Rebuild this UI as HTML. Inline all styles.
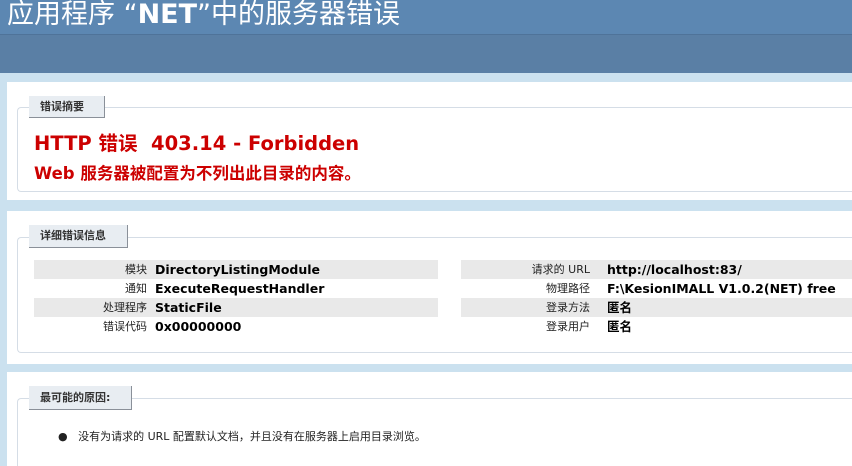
<!DOCTYPE html>
<html><head><meta charset="utf-8"><style>
*{margin:0;padding:0;box-sizing:border-box}
html,body{width:852px;height:466px;overflow:hidden}
body{background:#cbe1ef;font-family:"DejaVu Sans","Noto Sans CJK SC",sans-serif;position:relative}
#h1{position:absolute;left:0;top:0;width:852px;height:35px;background:#5c87b2;color:#fff;font-size:27px;line-height:30px;padding-left:7px;white-space:nowrap;border-bottom:1px solid #4f7399}
#band{position:absolute;left:0;top:35px;width:852px;height:38px;background:#5a7fa5}
.panel{position:absolute;left:7px;width:845px;background:#fff}
.fs{position:absolute;left:10px;right:0;border:1px solid #d5dde6;border-right:none;border-radius:4px 0 0 4px}
.lg{position:absolute;left:22px;background:#e8edf2;border-right:1px solid #8a9099;border-bottom:1px solid #8a9099;font-size:11px;font-weight:bold;color:#333;padding-left:11px;line-height:21px}
.red1{position:absolute;left:27px;top:45px;color:#cc0000;font-size:19.5px;font-weight:bold;white-space:nowrap}
.red2{position:absolute;left:27px;top:78px;color:#cc0000;font-size:16.5px;font-weight:bold;white-space:nowrap}
.row{position:absolute;height:19px;font-size:12.5px;line-height:19px;white-space:nowrap}
.g{background:#e9e9e9}
.lab{position:absolute;text-align:right;font-size:11px;color:#222}
.val{position:absolute;font-weight:bold;color:#000}
</style></head><body>
<div id="h1">应用程序 “<b>NET</b>”中的服务器错误</div>
<div id="band"></div>
<div class="panel" style="top:82px;height:118px">
 <div class="fs" style="top:25px;height:85px"></div>
 <div class="lg" style="top:14px;width:76px;height:22px">错误摘要</div>
 <div class="red1">HTTP 错误&nbsp; 403.14 - Forbidden</div>
 <div class="red2">Web 服务器被配置为不列出此目录的内容。</div>
</div>
<div class="panel" style="top:211px;height:153px">
 <div class="fs" style="top:26px;height:116px"></div>
 <div class="lg" style="top:14px;width:99px;height:23px">详细错误信息</div>
 <div class="row g" style="left:27px;top:49px;width:404px"></div>
 <div class="row g" style="left:27px;top:87px;width:404px"></div>
 <div class="row g" style="left:454px;top:49px;width:391px"></div>
 <div class="row g" style="left:454px;top:87px;width:391px"></div>
 <div class="row" style="left:0;top:49px;width:845px"><span class="lab" style="right:705px">模块</span><span class="val" style="left:148px">DirectoryListingModule</span><span class="lab" style="right:262px">请求的 URL</span><span class="val" style="left:600px">http://localhost:83/</span></div>
 <div class="row" style="left:0;top:68px;width:845px"><span class="lab" style="right:705px">通知</span><span class="val" style="left:148px">ExecuteRequestHandler</span><span class="lab" style="right:262px">物理路径</span><span class="val" style="left:600px">F:\KesionIMALL V1.0.2(NET) free</span></div>
 <div class="row" style="left:0;top:87px;width:845px"><span class="lab" style="right:705px">处理程序</span><span class="val" style="left:148px">StaticFile</span><span class="lab" style="right:262px">登录方法</span><span class="val" style="left:600px">匿名</span></div>
 <div class="row" style="left:0;top:106px;width:845px"><span class="lab" style="right:705px">错误代码</span><span class="val" style="left:148px">0x00000000</span><span class="lab" style="right:262px">登录用户</span><span class="val" style="left:600px">匿名</span></div>
</div>
<div class="panel" style="top:372px;height:94px">
 <div class="fs" style="top:26px;height:80px"></div>
 <div class="lg" style="top:14px;width:103px;height:24px;line-height:24px">最可能的原因:</div>
 <div style="position:absolute;left:51px;top:56px;font-size:11px;color:#222;white-space:nowrap">●&nbsp;&nbsp; 没有为请求的 URL 配置默认文档，并且没有在服务器上启用目录浏览。</div>
</div>
</body></html>
